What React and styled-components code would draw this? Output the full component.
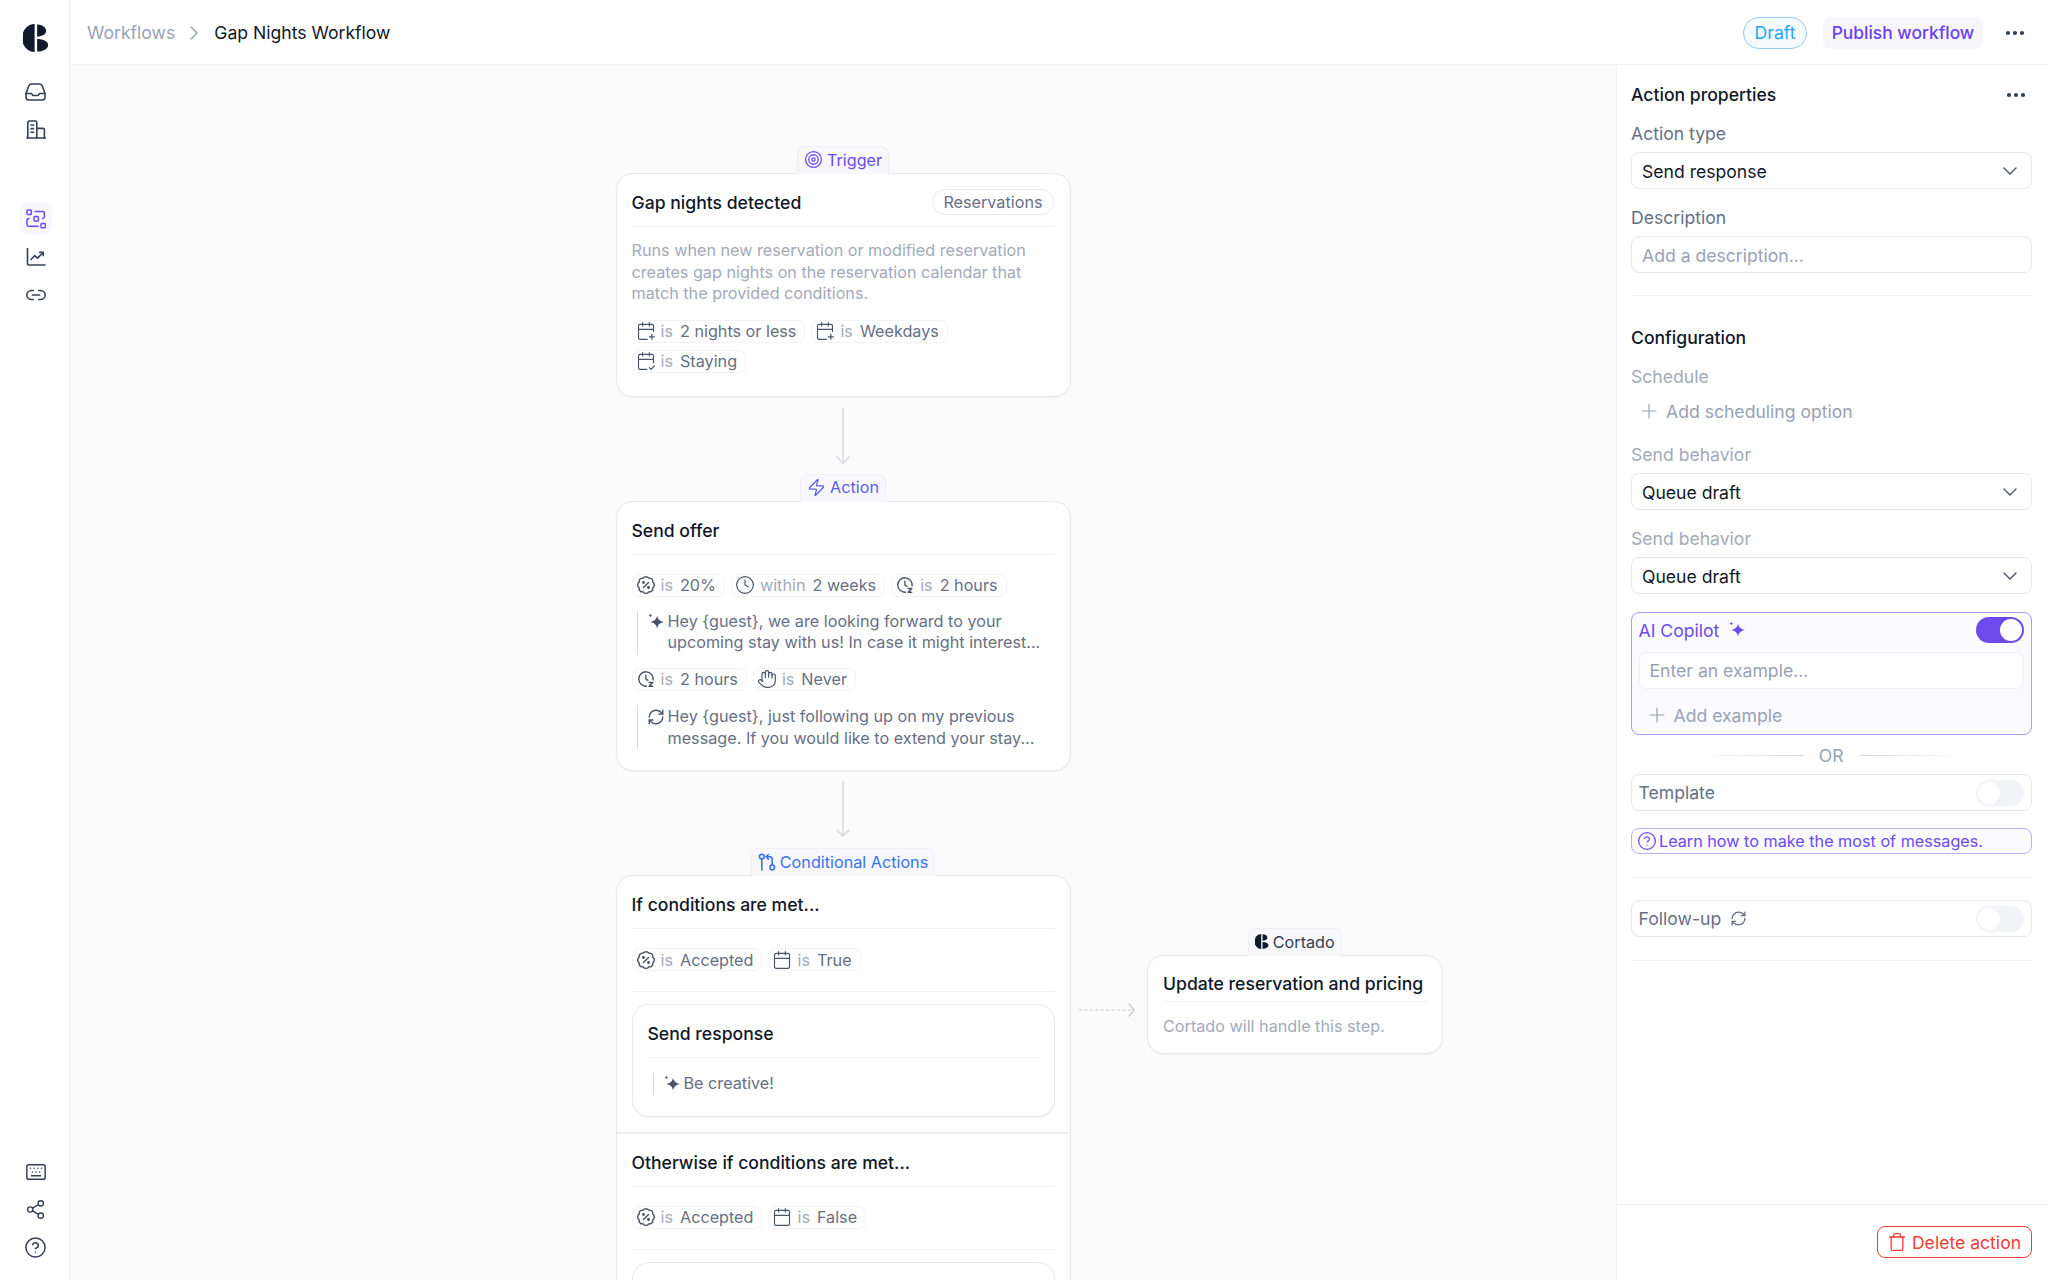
import React from "react";
import styled, { createGlobalStyle } from "styled-components";
import {
  Link2, Keyboard, Share2, CircleHelp, ChevronRight, ChevronDown, Ellipsis,
  Target, Zap, CalendarPlus, CalendarCheck2, Calendar, Clock, Hand, RefreshCw, Plus, Trash,
} from "lucide-react";

const GlobalStyle = createGlobalStyle`
  html, body { margin: 0; padding: 0; height: 100%; background: #fff; }
  body { font-family: Inter, "Liberation Sans", sans-serif; color: #101828; overflow: hidden; }
  * { box-sizing: border-box; }
`;

const Page = styled.div`
  display: flex;
  width: 2048px;
  height: 1280px;
  overflow: hidden;
`;

const Sidebar = styled.nav`
  width: 70px;
  flex: none;
  display: flex;
  flex-direction: column;
  align-items: center;
  padding: 24px 0 16px 2px;
  background: #fff;
  border-right: 1.5px solid #eeeef5;
`;

const NavGroup = styled.div`
  display: flex;
  flex-direction: column;
  align-items: center;
  gap: 5px;
  margin-top: ${(p) => p.$top || 0}px;
`;

const NavSpacer = styled.div`
  flex: 1;
`;

const NavItem = styled.div`
  width: 33px;
  height: 33px;
  display: flex;
  align-items: center;
  justify-content: center;
  border-radius: 9px;
  color: ${(p) => (p.$active ? "#6d4aff" : "#344054")};
  background: ${(p) => (p.$active ? "#f8f7fe" : "transparent")};
`;

const Main = styled.div`
  flex: 1;
  display: flex;
  flex-direction: column;
  min-width: 0;
`;

const Header = styled.header`
  height: 65px;
  flex: none;
  display: flex;
  align-items: center;
  padding: 1px 21px 0 17px;
  border-bottom: 1.5px solid #f2f2f7;
  background: #fff;
`;

const Crumb = styled.span`
  font-size: 17.6px;
  line-height: 24px;
  color: ${(p) => (p.$current ? "#101828" : "#98a2b3")};
  font-weight: 400;
`;

const CrumbSep = styled.span`
  display: flex;
  color: #98a2b3;
  margin: 0 8px 0 7px;
`;

const HeaderActions = styled.div`
  margin-left: auto;
  display: flex;
  align-items: center;
`;

const DraftBadge = styled.div`
  width: 64px;
  height: 32px;
  display: flex;
  align-items: center;
  justify-content: center;
  border: 1.5px solid #8ecdfb;
  border-radius: 16px;
  background: #f6fbff;
  color: #26a5f5;
  font-size: 17.6px;
`;

const PublishButton = styled.div`
  width: 160px;
  height: 32px;
  margin-left: 16px;
  display: flex;
  align-items: center;
  justify-content: center;
  border-radius: 8px;
  background: #f6f6fb;
  color: #6d3ff0;
  font-size: 17.4px;
  font-weight: 500;
`;

const DotsWrap = styled.div`
  display: flex;
  color: #344054;
  margin-left: ${(p) => p.$left || 0}px;
  margin-right: ${(p) => p.$right || 0}px;
`;

const Content = styled.div`
  flex: 1;
  display: flex;
  min-height: 0;
`;

const Canvas = styled.main`
  position: relative;
  flex: 1;
  min-width: 0;
  overflow: hidden;
  display: flex;
  flex-direction: column;
  align-items: center;
  padding-top: 81px;
  background: #fbfbfc;
`;

const Tab = styled.div`
  position: relative;
  z-index: 1;
  flex: none;
  height: 28px;
  margin-bottom: -1px;
  padding: 0 6px 2px;
  display: flex;
  align-items: center;
  gap: 4px;
  font-size: 16.2px;
  color: ${(p) => p.$color};
  background: #f7f7fc;
  border: 1px solid #efeff6;
  border-bottom: none;
  border-radius: 8px 8px 0 0;
`;

const Card = styled.section`
  position: relative;
  width: ${(p) => p.$width || "455px"};
  flex: none;
  padding: ${(p) => p.$padding || "0 15px 23px"};
  background: #fff;
  border: 1.5px solid #e7e7f1;
  border-radius: 17px;
  box-shadow: 0 1px 2px rgba(16, 24, 40, 0.05);
`;

const CardHead = styled.div`
  height: ${(p) => (p.$compact ? 47 : 54)}px;
  margin-top: -1px;
  padding-top: ${(p) => (p.$compact ? 14 : 16)}px;
  padding-bottom: ${(p) => (p.$compact ? 6 : 12)}px;
  display: flex;
  align-items: center;
  justify-content: space-between;
  border-bottom: 1px solid #f0f0f5;
`;

const CardTitle = styled.h3`
  margin: 2px 0 0;
  font-size: 17.6px;
  font-weight: 500;
  color: #101828;
`;

const Pill = styled.span`
  height: 26px;
  margin-right: 1px;
  padding: 0 10px;
  display: flex;
  align-items: center;
  font-size: 16.2px;
  color: #667085;
  border: 1.5px solid #e9e9f1;
  border-radius: 13px;
`;

const Muted = styled.p`
  margin: ${(p) => p.$margin || "13px 0 15px"};
  font-size: 16.2px;
  line-height: 21.6px;
  color: #a3aab8;
`;

const ChipRow = styled.div`
  display: flex;
  flex-wrap: wrap;
  gap: 7px 6px;
  margin-top: ${(p) => p.$top || 0}px;
  margin-bottom: ${(p) => p.$bottom || 0}px;
`;

const ChipBox = styled.span`
  height: 23px;
  padding: 0 8px 0 3px;
  display: inline-flex;
  align-items: center;
  gap: 5px;
  font-size: 16.2px;
  color: #667085;
  border: 1px solid #f2f2f7;
  border-radius: 8px;
  svg { flex: none; color: #475467; }
`;

const ChipOp = styled.span`
  color: #a3aab8;
  margin-right: 2px;
`;

const Quote = styled.div`
  display: flex;
  gap: 3px;
  margin: ${(p) => p.$margin || "14px 0 14px 5px"};
  padding-left: 9px;
  font-size: 16.2px;
  line-height: 21.6px;
  color: #667085;
  border-left: 1.5px solid #d5d8e0;
  svg { flex: none; margin-top: 2px; color: #475467; }
`;

const SectionRule = styled.div`
  height: 1px;
  background: #f0f0f5;
  margin: ${(p) => p.$margin || "0"};
`;

const BranchRule = styled.div`
  height: 2px;
  background: #eeeef5;
  margin: 15px -15px 0;
`;

const SideNode = styled.div`
  position: absolute;
  left: 1077px;
  top: 863px;
  display: flex;
  flex-direction: column;
  align-items: center;
`;

const DottedArrow = styled.svg`
  position: absolute;
  left: 1009px;
  top: 938px;
  color: #c6cad3;
`;

const Panel = styled.aside`
  width: 432px;
  flex: none;
  display: flex;
  flex-direction: column;
  background: #fff;
  border-left: 1.5px solid #f2f2f7;
`;

const PanelBody = styled.div`
  flex: 1;
  padding: 0 16.5px 0 14px;
`;

const PanelHead = styled.div`
  height: 24px;
  margin-top: 18px;
  display: flex;
  align-items: center;
  justify-content: space-between;
`;

const PanelTitle = styled.h4`
  margin: ${(p) => p.$margin || "0"};
  font-size: 17.6px;
  line-height: 24px;
  font-weight: 500;
  color: #101828;
`;

const FieldLabel = styled.div`
  margin: ${(p) => p.$margin || "0"};
  height: 24px;
  display: flex;
  align-items: center;
  font-size: 17.6px;
  color: ${(p) => (p.$light ? "#a3aab8" : "#667085")};
`;

const SelectBox = styled.div`
  height: 37px;
  margin-top: 7px;
  padding: 1px 9px 0 10px;
  display: flex;
  align-items: center;
  justify-content: space-between;
  font-size: 17.6px;
  color: ${(p) => (p.$placeholder ? "#98a2b3" : "#101828")};
  background: #fff;
  border: 1.5px solid #e7e7f1;
  border-radius: 8px;
  svg { color: #475467; }
`;

const AddRow = styled.div`
  height: 24px;
  margin: ${(p) => p.$margin || "0"};
  display: flex;
  align-items: center;
  gap: 5px;
  padding-left: 6px;
  font-size: 17.6px;
  color: #98a2b3;
`;

const CopilotBox = styled.div`
  height: 123px;
  margin-top: 18px;
  padding: 4px 6.5px 0;
  background: #fbfaff;
  border: 1.5px solid #ad9cf8;
  border-radius: 8px;
`;

const ToggleRow = styled.div`
  display: flex;
  align-items: center;
  justify-content: space-between;
  height: 26px;
  font-size: 17.6px;
  color: ${(p) => p.$color || "#667085"};
`;

const ToggleLabel = styled.span`
  display: flex;
  align-items: center;
  gap: 9px;
`;

const Toggle = styled.div`
  width: 48px;
  height: 26px;
  padding: 2px;
  display: flex;
  justify-content: ${(p) => (p.$on ? "flex-end" : "flex-start")};
  border-radius: 13px;
  background: ${(p) => (p.$on ? "#6d4aee" : "#f2f3f7")};
  &::after {
    content: "";
    width: 22px;
    height: 22px;
    border-radius: 50%;
    background: #fff;
  }
`;

const ExampleInput = styled.div`
  height: 37px;
  margin-top: 9px;
  padding: 0 10px;
  display: flex;
  align-items: center;
  font-size: 17.6px;
  color: #98a2b3;
  background: #fff;
  border: 1.5px solid #eeeef5;
  border-radius: 8px;
`;

const OrRow = styled.div`
  height: 24px;
  margin-top: 8px;
  display: flex;
  align-items: center;
  justify-content: center;
  gap: 16px;
  font-size: 17.6px;
  color: #98a2b3;
  &::before, &::after {
    content: "";
    width: 104px;
    height: 1px;
  }
  &::before { background: linear-gradient(to right, transparent, #d5d8e0); }
  &::after { background: linear-gradient(to left, transparent, #d5d8e0); }
`;

const ToggleBox = styled.div`
  height: 37px;
  margin-top: ${(p) => p.$top || 0}px;
  padding: 0 6.5px;
  display: flex;
  flex-direction: column;
  justify-content: center;
  border: 1.5px solid #e7e7f1;
  border-radius: 8px;
`;

const LearnBox = styled.div`
  height: 26px;
  margin-top: 17px;
  padding-left: 5px;
  display: flex;
  align-items: center;
  gap: 2px;
  font-size: 16.2px;
  color: #6d4aee;
  background: #fbfaff;
  border: 1.5px solid #bdb0fa;
  border-radius: 8px;
`;

const PanelFoot = styled.div`
  height: 76px;
  flex: none;
  display: flex;
  justify-content: flex-end;
  align-items: flex-start;
  padding: 21px 16.5px 0 0;
  border-top: 1px solid #f2f2f7;
`;

const DeleteButton = styled.div`
  width: 155px;
  height: 32px;
  display: flex;
  align-items: center;
  justify-content: center;
  gap: 5px;
  font-size: 17.6px;
  color: #ef3d36;
  border: 1.5px solid #ef3d36;
  border-radius: 8px;
`;

const Logo = ({ size = 28 }) => (
  <svg width={size * 0.9} height={size} viewBox="0 0 25 28" fill="#0f1b2d">
    <path d="M11.5 0V28A12.5 14 0 0 1 11.5 0Z" />
    <path d="M14 .5C19.5 .5 23 3.5 23 7 23 10 19.5 12.5 14 12.5Z" />
    <path d="M14 15C20.5 15 25 17.5 25 21 25 25 20 27.5 14 27.5Z" />
  </svg>
);

const TrayIcon = () => (
  <svg width="21" height="18" viewBox="0 0 21 18" fill="none" stroke="currentColor" strokeWidth="1.6" strokeLinecap="round" strokeLinejoin="round">
    <path d="M1 10.5 3.6 3.2A3 3 0 0 1 6.4 1h8.2a3 3 0 0 1 2.8 2.2L20 10.5" />
    <path d="M1 10.5v3.7a2.8 2.8 0 0 0 2.8 2.8h13.4a2.8 2.8 0 0 0 2.8-2.8v-3.7h-5a1 1 0 0 0-.9.5l-.6 1a1 1 0 0 1-.9.5H8.4a1 1 0 0 1-.9-.5l-.6-1a1 1 0 0 0-.9-.5H1Z" />
  </svg>
);

const BuildingIcon = () => (
  <svg width="20" height="19" viewBox="0 0 20 19" fill="none" stroke="currentColor" strokeWidth="1.6" strokeLinecap="round" strokeLinejoin="round">
    <path d="M1 18h18.6" />
    <path d="M1.8 18V2.4A1.4 1.4 0 0 1 3.2 1h6.2a1.4 1.4 0 0 1 1.4 1.4V18" />
    <path d="M10.8 8.4h6.2a1.4 1.4 0 0 1 1.4 1.4V18" />
    <path d="M5 5h2.6M5 8.6h2.6M5 12.2h2.6" />
  </svg>
);

const FlowIcon = () => (
  <svg width="20" height="20" viewBox="0 0 20 20" fill="none" stroke="currentColor" strokeWidth="1.5" strokeLinecap="round">
    <rect x="1" y="1" width="4.4" height="4.4" rx="0.8" />
    <rect x="8" y="7.6" width="4.4" height="4.4" rx="0.8" />
    <rect x="15" y="14.4" width="4.4" height="4.4" rx="0.8" />
    <path d="M9 2.6h7.4a2 2 0 0 1 2 2v3a2 2 0 0 1-1.6 2" />
    <path d="M3 9.6a2 2 0 0 0-2 2v3.6a2 2 0 0 0 2 2h9" />
  </svg>
);

const ChartIcon = () => (
  <svg width="20" height="20" viewBox="0 0 20 20" fill="none" stroke="currentColor" strokeWidth="1.6" strokeLinecap="round" strokeLinejoin="round">
    <path d="M1.5 1.5V17a1 1 0 0 0 1 1H19" />
    <path d="M5 12.5l3.6-3.8 3 2.4 5.4-5.6" />
    <path d="M13.6 5.2H17.2V8.6" />
  </svg>
);

const Sparkle = ({ size = 18 }) => (
  <svg width={size} height={size} viewBox="0 0 16 16" fill="currentColor">
    <path d="M9 2.2c.5 3.2 1.7 4.6 6 5.8-4.3 1.1-5.5 2.6-6 6-.6-3.4-1.8-4.9-6-6 4.2-1.2 5.4-2.6 6-5.8Z" />
    <path d="M3 .4c.2 1.1.5 1.5 1.7 1.8C3.5 2.5 3.2 3 3 4.1 2.8 3 2.4 2.5 1.3 2.2 2.4 1.9 2.8 1.5 3 .4Z" />
  </svg>
);

const ClockZ = () => (
  <svg width="20" height="20" viewBox="-1.5 -1.5 20 20" fill="none" stroke="currentColor" strokeWidth="1.4" strokeLinecap="round" strokeLinejoin="round">
    <path d="M15.6 9.4A7.2 7.2 0 1 0 9 15.7" />
    <path d="M8.4 4.6v4l2 1.2" />
    <path d="M11.6 12h3.6l-3.6 3.8h3.6" />
  </svg>
);

const PercentBadge = () => (
  <svg width="20" height="20" viewBox="0 0 24 24" fill="none" stroke="currentColor" strokeWidth="1.7" strokeLinecap="round" strokeLinejoin="round">
    <path d="M3.85 8.62a4 4 0 0 1 4.78-4.77 4 4 0 0 1 6.74 0 4 4 0 0 1 4.78 4.78 4 4 0 0 1 0 6.74 4 4 0 0 1-4.77 4.78 4 4 0 0 1-6.75 0 4 4 0 0 1-4.78-4.77 4 4 0 0 1 0-6.76Z" />
    <path d="m15 9-6 6" />
    <circle cx="9" cy="9" r="0.9" fill="currentColor" />
    <circle cx="15" cy="15" r="0.9" fill="currentColor" />
  </svg>
);

const BranchIcon = () => (
  <svg width="18" height="18" viewBox="0 0 17 17" fill="none" stroke="currentColor" strokeWidth="1.5" strokeLinecap="round" strokeLinejoin="round">
    <circle cx="3.6" cy="3.4" r="2.2" />
    <circle cx="13.4" cy="13.6" r="2.2" />
    <path d="M3.6 5.6V16" />
    <path d="M13.4 11.4V6a2.4 2.4 0 0 0-2.4-2.4H8" />
    <path d="M9.8 1.4 7.6 3.6l2.2 2.2" />
  </svg>
);

const DownArrow = styled.svg`
  display: block;
  flex: none;
  margin: ${(p) => p.$before}px 0 ${(p) => p.$after}px;
  color: #d0d5dd;
`;

const FlowArrow = ({ before, after }) => (
  <DownArrow $before={before} $after={after} width="14" height="56" viewBox="0 0 14 56" fill="none" stroke="currentColor" strokeWidth="1.2" strokeLinecap="round" strokeLinejoin="round">
    <path d="M7 0.5V55" />
    <path d="M1 49l6 6 6-6" />
  </DownArrow>
);

const Chip = ({ icon, op, value }) => (
  <ChipBox>
    {icon}
    <ChipOp>{op}</ChipOp>
    <span>{value}</span>
  </ChipBox>
);

const ConditionBlock = ({ title, value, children }) => (
  <>
    <CardHead>
      <CardTitle>{title}</CardTitle>
    </CardHead>
    <ChipRow $top={19} $bottom={20}>
      <Chip icon={<PercentBadge />} op="is" value="Accepted" />
      <Chip icon={<Calendar size={20} strokeWidth={1.4} />} op="is" value={value} />
    </ChipRow>
    <SectionRule $margin="0 0 12px" />
    <Card $width="100%" $padding="0 15px 21px">
      {children}
    </Card>
  </>
);

export default function App() {
  return (
    <Page>
      <GlobalStyle />
      <Sidebar>
        <Logo />
        <NavGroup $top={23}>
          <NavItem><TrayIcon /></NavItem>
          <NavItem><BuildingIcon /></NavItem>
        </NavGroup>
        <NavGroup $top={56}>
          <NavItem $active><FlowIcon /></NavItem>
          <NavItem><ChartIcon /></NavItem>
          <NavItem><Link2 size={22} strokeWidth={1.7} /></NavItem>
        </NavGroup>
        <NavSpacer />
        <NavGroup>
          <NavItem><Keyboard size={22} strokeWidth={1.6} /></NavItem>
          <NavItem><Share2 size={21} strokeWidth={1.6} /></NavItem>
          <NavItem><CircleHelp size={23} strokeWidth={1.6} /></NavItem>
        </NavGroup>
      </Sidebar>
      <Main>
        <Header>
          <Crumb>Workflows</Crumb>
          <CrumbSep><ChevronRight size={24} strokeWidth={1.5} /></CrumbSep>
          <Crumb $current>Gap Nights Workflow</Crumb>
          <HeaderActions>
            <DraftBadge>Draft</DraftBadge>
            <PublishButton>Publish workflow</PublishButton>
            <DotsWrap $left={20}><Ellipsis size={24} strokeWidth={2.2} /></DotsWrap>
          </HeaderActions>
        </Header>
        <Content>
          <Canvas>
            <Tab $color="#6d4aee"><Target size={19} strokeWidth={1.6} />Trigger</Tab>
            <Card>
              <CardHead>
                <CardTitle>Gap nights detected</CardTitle>
                <Pill>Reservations</Pill>
              </CardHead>
              <Muted>
                Runs when new reservation or modified reservation creates gap nights on the reservation calendar that match the provided conditions.
              </Muted>
              <ChipRow>
                <Chip icon={<CalendarPlus size={20} strokeWidth={1.4} />} op="is" value="2 nights or less" />
                <Chip icon={<CalendarPlus size={20} strokeWidth={1.4} />} op="is" value="Weekdays" />
                <Chip icon={<CalendarCheck2 size={20} strokeWidth={1.4} />} op="is" value="Staying" />
              </ChipRow>
            </Card>
            <FlowArrow before={11} after={10} />
            <Tab $color="#5b5ff0"><Zap size={19} strokeWidth={1.6} />Action</Tab>
            <Card $padding="0 15px 21px">
              <CardHead>
                <CardTitle>Send offer</CardTitle>
              </CardHead>
              <ChipRow $top={19}>
                <Chip icon={<PercentBadge />} op="is" value="20%" />
                <Chip icon={<Clock size={20} strokeWidth={1.4} />} op="within" value="2 weeks" />
                <Chip icon={<ClockZ />} op="is" value="2 hours" />
              </ChipRow>
              <Quote>
                <Sparkle />
                <span>{"Hey {guest}, we are looking forward to your upcoming stay with us! In case it might interest..."}</span>
              </Quote>
              <ChipRow>
                <Chip icon={<ClockZ />} op="is" value="2 hours" />
                <Chip icon={<Hand size={20} strokeWidth={1.4} />} op="is" value="Never" />
              </ChipRow>
              <Quote $margin="15px 0 0 5px">
                <RefreshCw size={18} strokeWidth={1.8} />
                <span>{"Hey {guest}, just following up on my previous message. If you would like to extend your stay..."}</span>
              </Quote>
            </Card>
            <FlowArrow before={10} after={11} />
            <Tab $color="#3574f0"><BranchIcon />Conditional Actions</Tab>
            <Card $padding="0 15px 23px">
              <ConditionBlock title="If conditions are met..." value="True">
                <CardHead>
                  <CardTitle>Send response</CardTitle>
                </CardHead>
                <Quote $margin="15px 0 0 5px">
                  <Sparkle />
                  <span>Be creative!</span>
                </Quote>
              </ConditionBlock>
              <BranchRule />
              <ConditionBlock title="Otherwise if conditions are met..." value="False">
                <CardHead />
              </ConditionBlock>
            </Card>
            <DottedArrow width="56" height="14" viewBox="0 0 56 14" fill="none" stroke="currentColor" strokeWidth="1.2" strokeLinecap="round" strokeLinejoin="round">
              <path d="M0.5 7H54" strokeDasharray="2 3.4" />
              <path d="M50 1l5 6-5 6" />
            </DottedArrow>
            <SideNode>
              <Tab $color="#344054"><Logo size={15} />Cortado</Tab>
              <Card $width="296px" $padding="0 15px 0">
                <CardHead $compact>
                  <CardTitle>Update reservation and pricing</CardTitle>
                </CardHead>
                <Muted $margin="14px 0 15px">Cortado will handle this step.</Muted>
              </Card>
            </SideNode>
          </Canvas>
          <Panel>
            <PanelBody>
              <PanelHead>
                <PanelTitle>Action properties</PanelTitle>
                <DotsWrap $right={4}><Ellipsis size={24} strokeWidth={2.2} /></DotsWrap>
              </PanelHead>
              <FieldLabel $margin="14px 0 0">Action type</FieldLabel>
              <SelectBox>Send response<ChevronDown size={24} strokeWidth={1.4} /></SelectBox>
              <FieldLabel $margin="16px 0 0">Description</FieldLabel>
              <SelectBox $placeholder>Add a description...</SelectBox>
              <SectionRule $margin="22px 0 0" />
              <PanelTitle $margin="30px 0 0">Configuration</PanelTitle>
              <FieldLabel $light $margin="14px 0 0">Schedule</FieldLabel>
              <AddRow $margin="11px 0 0"><Plus size={24} strokeWidth={1.2} />Add scheduling option</AddRow>
              <FieldLabel $light $margin="19px 0 0">Send behavior</FieldLabel>
              <SelectBox>Queue draft<ChevronDown size={24} strokeWidth={1.4} /></SelectBox>
              <FieldLabel $light $margin="16px 0 0">Send behavior</FieldLabel>
              <SelectBox>Queue draft<ChevronDown size={24} strokeWidth={1.4} /></SelectBox>
              <CopilotBox>
                <ToggleRow $color="#6d4aee">
                  <ToggleLabel>AI Copilot <Sparkle /></ToggleLabel>
                  <Toggle $on />
                </ToggleRow>
                <ExampleInput>Enter an example...</ExampleInput>
                <AddRow $margin="14px 0 0"><Plus size={24} strokeWidth={1.2} />Add example</AddRow>
              </CopilotBox>
              <OrRow>OR</OrRow>
              <ToggleBox $top={7}>
                <ToggleRow>
                  <ToggleLabel>Template</ToggleLabel>
                  <Toggle />
                </ToggleRow>
              </ToggleBox>
              <LearnBox><CircleHelp size={20} strokeWidth={1.5} />Learn how to make the most of messages.</LearnBox>
              <SectionRule $margin="23px 0 0" />
              <ToggleBox $top={22}>
                <ToggleRow>
                  <ToggleLabel>Follow-up <RefreshCw size={17} strokeWidth={1.8} /></ToggleLabel>
                  <Toggle />
                </ToggleRow>
              </ToggleBox>
              <SectionRule $margin="23px 0 0" />
            </PanelBody>
            <PanelFoot>
              <DeleteButton><Trash size={20} strokeWidth={1.6} />Delete action</DeleteButton>
            </PanelFoot>
          </Panel>
        </Content>
      </Main>
    </Page>
  );
}
